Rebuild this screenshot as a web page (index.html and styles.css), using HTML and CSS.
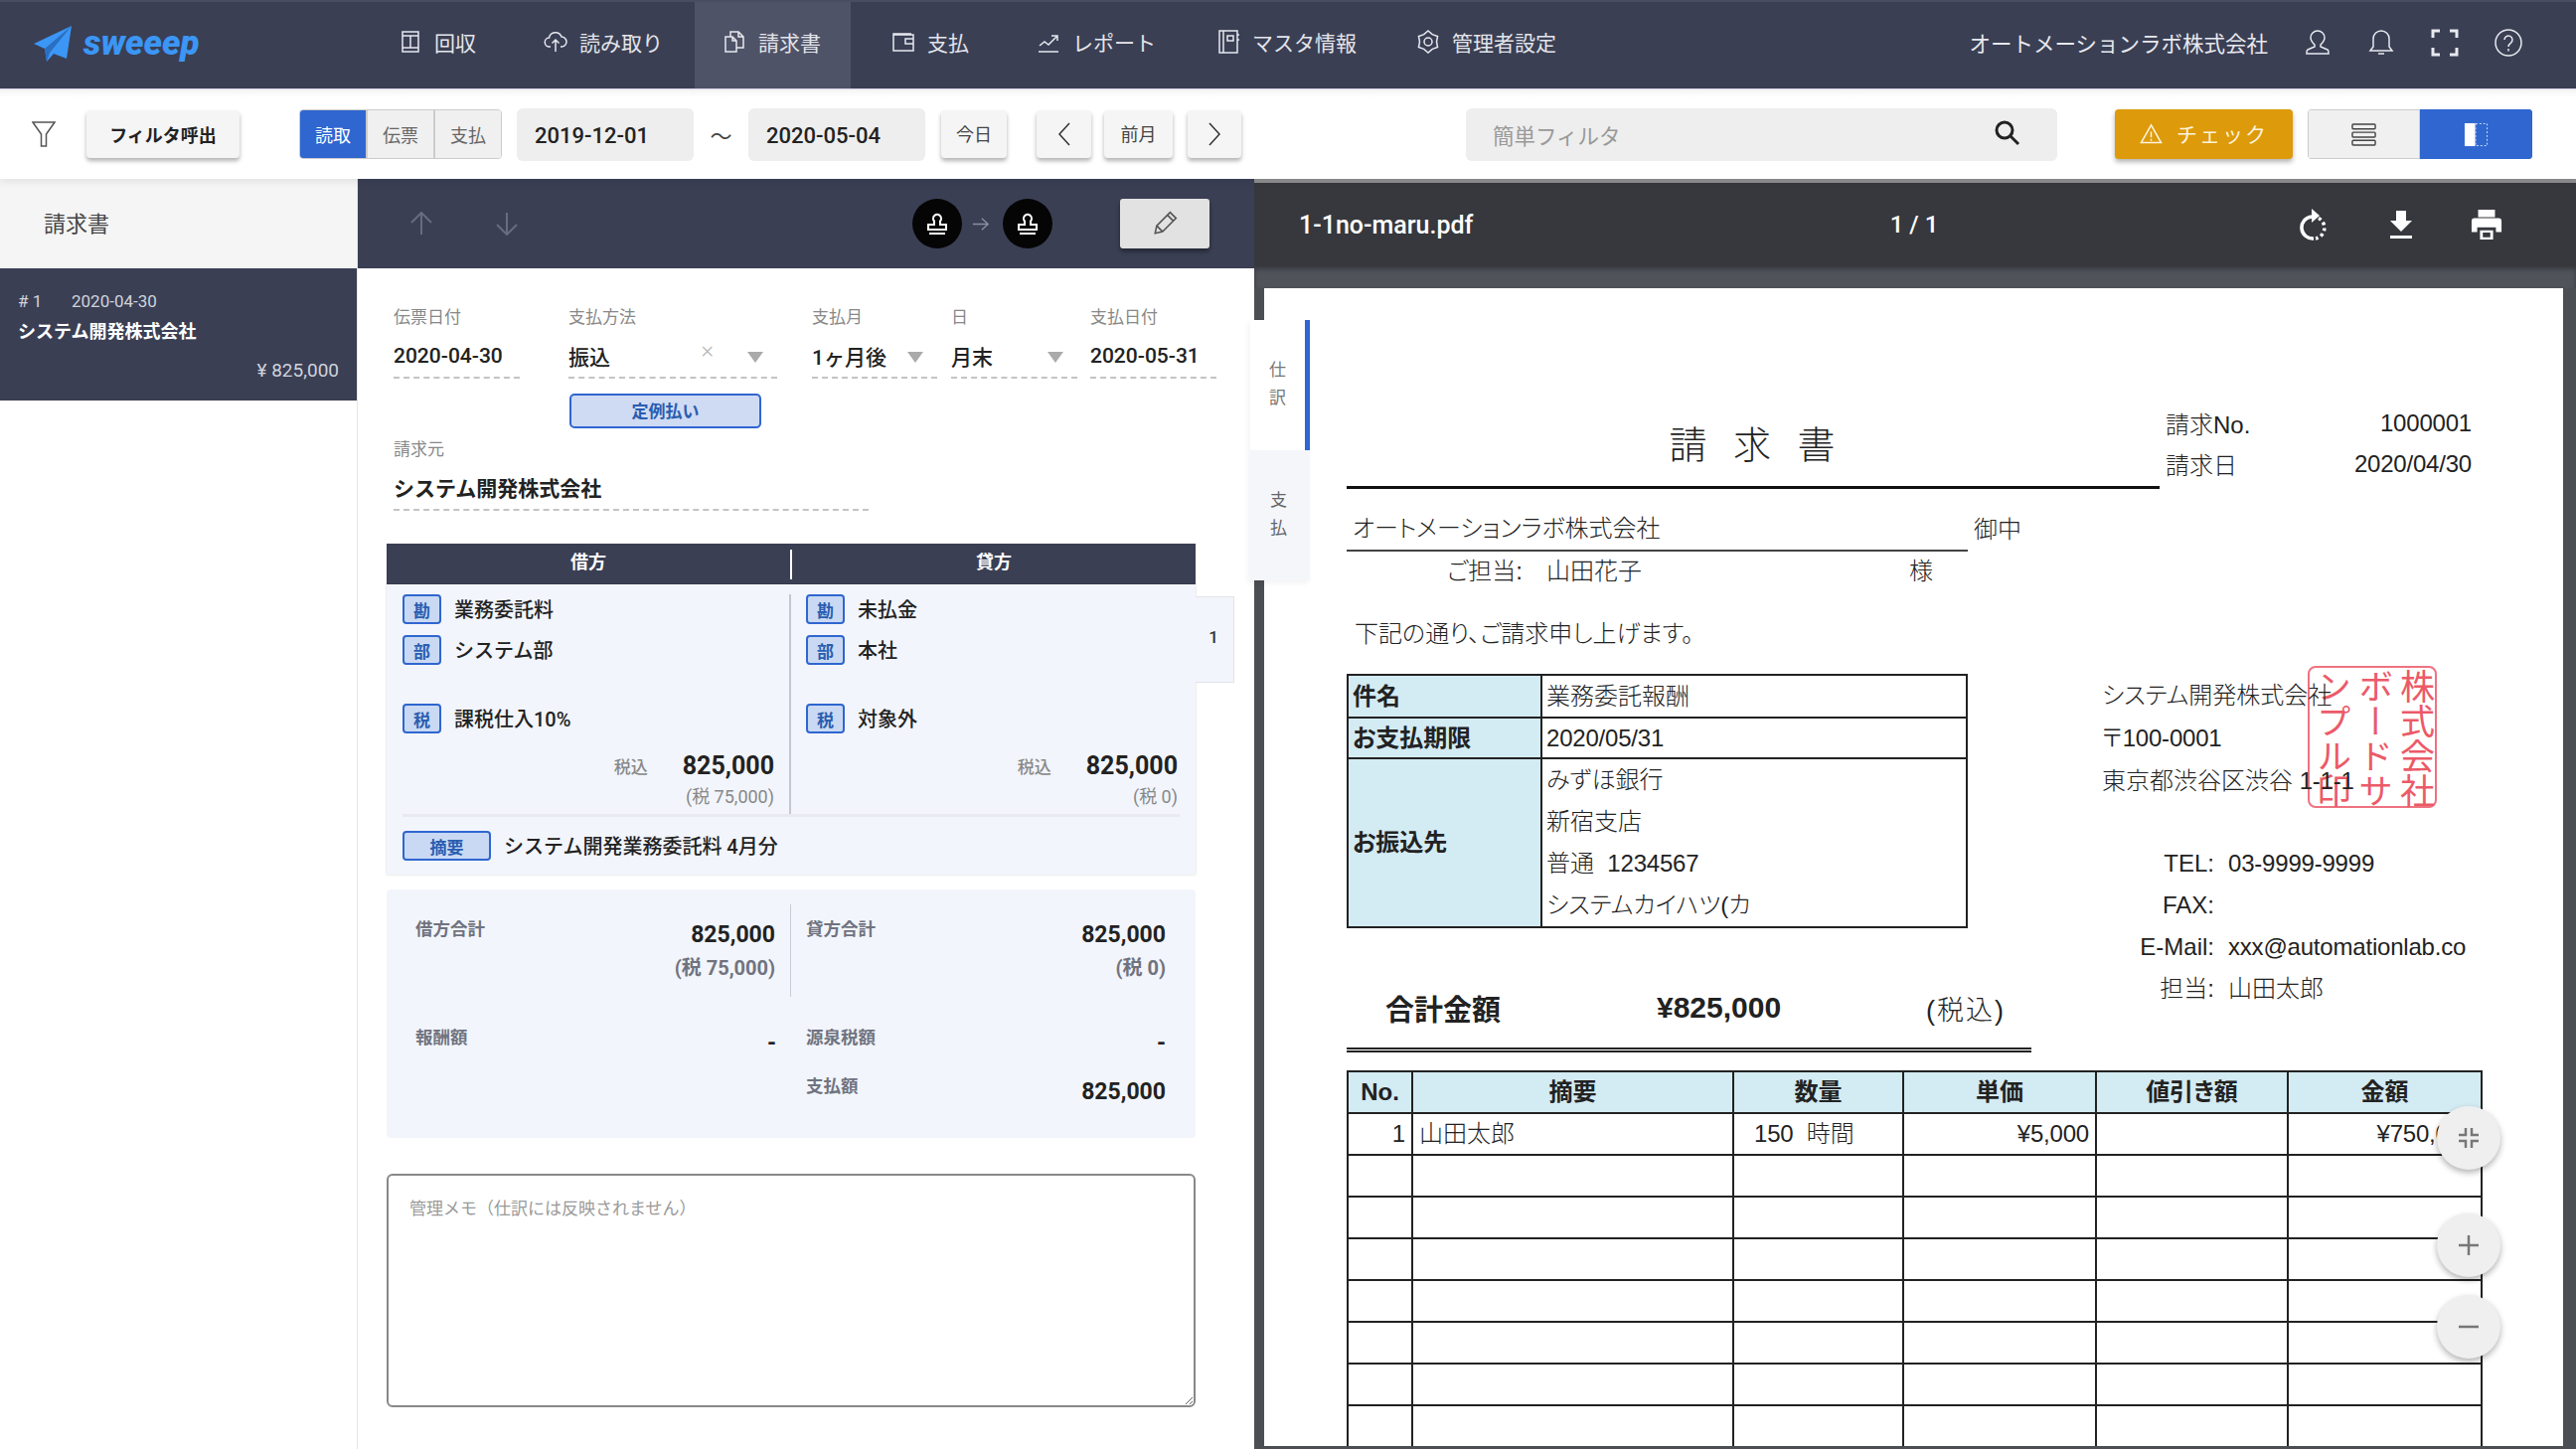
FILE: index.html
```html
<!DOCTYPE html>
<html lang="ja">
<head>
<meta charset="utf-8">
<title>sweeep 請求書</title>
<link rel="stylesheet" href="styles.css">
</head>
<body>
<div class="app">
  <header class="topbar">
    <div class="logo">
      <svg class="logo-mark" viewBox="0 0 38 36"><path d="M38 0 0 18l11 5 2 13 7-8 13 5z" fill="#3b96f5"/><path d="M38 0 11 23l2 13 3-9z" fill="#2a6fc0"/></svg>
      <span class="logo-text">sweeep</span>
    </div>
    <nav class="nav">
      <a class="nav-item"><svg class="ico" viewBox="0 0 24 24"><path d="M4 2h16v20H4zM4 6h16M4 18h16M12 6v12"/></svg><span>回収</span></a>
      <a class="nav-item"><svg class="ico" viewBox="0 0 24 24"><path d="M7 17H6a4.5 4.5 0 0 1-.5-9A6.5 6.5 0 0 1 18 7a5 5 0 0 1 0 10h-1M12 22V10M8.500 13.500 12 10l3.500 3.500"/></svg><span>読み取り</span></a>
      <a class="nav-item is-active"><svg class="ico" viewBox="0 0 24 24"><path d="M3 7h7l4 4v11H3zM10 7v4h4M8 7V2h8l5 5v11h-7M16 2v5h5"/></svg><span>請求書</span></a>
      <a class="nav-item"><svg class="ico" viewBox="0 0 24 24"><path d="M2 5h20v16H2zM22 9h-8v5h8M2 5V4h18"/></svg><span>支払</span></a>
      <a class="nav-item"><svg class="ico" viewBox="0 0 24 24"><path d="M2 22h20M3 16l5-4 4 3 8-8M15 6h6v5"/></svg><span>レポート</span></a>
      <a class="nav-item"><svg class="ico" viewBox="0 0 24 24"><path d="M3 1h18v22H3zM7 1v22M11 6h6v5h-6zM21 5h2M21 10h2"/></svg><span>マスタ情報</span></a>
      <a class="nav-item"><svg class="ico" viewBox="0 0 24 24"><path d="M12 1l4.250 3.640 5.280 1.860-1.030 5.500 1.030 5.500-5.280 1.860L12 23l-4.250-3.640-5.280-1.860L3.500 12 2.470 6.500l5.280-1.860z"/><circle cx="12" cy="12" r="4"/></svg><span>管理者設定</span></a>
    </nav>
    <div class="top-right">
      <span class="company">オートメーションラボ株式会社</span>
      <span class="top-ico"><svg class="ico ico-lg" viewBox="0 0 28 28"><path d="M14 2a7 7 0 0 0-7 7c0 3 2 5 4 7v2l-7 3c-1 .5-1 2-1 3v1h22v-1c0-1 0-2.500-1-3l-7-3v-2c2-2 4-4 4-7a7 7 0 0 0-7-7z"/></svg></span>
      <span class="top-ico"><svg class="ico ico-lg" viewBox="0 0 28 28"><path d="M14 2a8 8 0 0 0-8 8v8l-3 4h22l-3-4v-8a8 8 0 0 0-8-8zM11 25h6"/></svg></span>
      <span class="top-ico"><svg class="ico ico-lg ico-bold" viewBox="0 0 28 28"><path d="M2 9V2h7M19 2h7v7M26 19v7h-7M9 26H2v-7"/></svg></span>
      <span class="top-ico"><svg class="ico ico-lg" viewBox="0 0 28 28"><circle cx="14" cy="14" r="13"/><path d="M10 11a4 4 0 1 1 6.500 3.100c-1.500 1.100-2.500 2-2.500 3.900M14 20v2.500"/></svg></span>
    </div>
  </header>

  <div class="toolbar">
    <svg class="filter-ico" viewBox="0 0 24 26"><path d="M1 1h22l-8.500 12v12h-5V13z"/></svg>
    <button class="tbtn tbtn-filter">フィルタ呼出</button>
    <div class="seg">
      <span class="seg-item is-on">読取</span><span class="seg-item">伝票</span><span class="seg-item">支払</span>
    </div>
    <div class="date-box date-first">2019-12-01</div>
    <span class="tilde">〜</span>
    <div class="date-box">2020-05-04</div>
    <button class="tbtn tbtn-today">今日</button>
    <button class="tbtn tbtn-prev"><svg class="chev" viewBox="0 0 14 24"><path d="M12 1 2 12l10 11"/></svg></button>
    <button class="tbtn tbtn-month">前月</button>
    <button class="tbtn tbtn-next"><svg class="chev" viewBox="0 0 14 24"><path d="M2 1l10 11L2 23"/></svg></button>
    <div class="search">
      <span class="search-ph">簡単フィルタ</span>
      <svg class="search-ico" viewBox="0 0 26 26"><circle cx="10" cy="10" r="8"/><path d="M16 16l8 8"/></svg>
    </div>
    <button class="check-btn"><svg class="warn-ico" viewBox="0 0 24 22"><path d="M12 2 1.500 20.500h21zM12 9v6M12 16.500v2"/></svg><span>チェック</span></button>
    <div class="view-toggle">
      <span class="view-item"><svg class="view-ico" viewBox="0 0 26 26"><rect x="1" y="2" width="24" height="5" rx="1"/><rect x="1" y="10.500" width="24" height="5" rx="1"/><rect x="1" y="19" width="24" height="5" rx="1"/></svg></span>
      <span class="view-item is-on"><svg class="split-ico" viewBox="0 0 26 26"><rect x="1" y="1" width="11" height="24" fill="#fff"/><rect x="12.500" y="1.500" width="12" height="23" fill="none" stroke="#d6e2fa" stroke-dasharray="2 2"/></svg></span>
    </div>
  </div>

  <div class="main">
    <aside class="sidebar">
      <div class="side-head">請求書</div>
      <div class="side-item">
        <div class="side-meta"><span class="side-no"># 1</span><span>2020-04-30</span></div>
        <div class="side-name">システム開発株式会社</div>
        <div class="side-amt">¥ 825,000</div>
      </div>
    </aside>

    <section class="center">
      <div class="center-bar">
        <svg class="updown" viewBox="0 0 24 24"><path d="M12 23V1M2 11 12 1l10 10"/></svg>
        <svg class="updown updown-2" viewBox="0 0 24 24"><path d="M12 1v22M2 13l10 10 10-10"/></svg>
        <span class="stamp-btn stamp-first"><svg class="stamp-ico" viewBox="0 0 24 24"><path d="M9 13V9.500a4 4 0 1 1 6 0V13h6v5H3v-5zM4 22h16" /></svg></span>
        <svg class="step-arrow" viewBox="0 0 20 16"><path d="M1 8h17M11 1.500 18 8l-7 6.500"/></svg>
        <span class="stamp-btn"><svg class="stamp-ico" viewBox="0 0 24 24"><path d="M9 13V9.500a4 4 0 1 1 6 0V13h6v5H3v-5zM4 22h16"/></svg></span>
        <button class="edit-btn"><svg class="pencil" viewBox="0 0 26 26"><path d="M4 22l1.500-7L18 2.500l5.500 5.500L11 20.500zM15.500 5l5.500 5.500M5.500 15l5.500 5.500"/></svg></button>
      </div>

      <div class="form">
        <div class="field-row">
          <div class="field f-date"><div class="f-label">伝票日付</div><div class="f-value">2020-04-30</div></div>
          <div class="field f-method"><div class="f-label">支払方法</div><div class="f-value">振込<span class="f-clear">×</span><span class="caret"></span></div></div>
          <div class="field f-month"><div class="f-label">支払月</div><div class="f-value">1ヶ月後<span class="caret"></span></div></div>
          <div class="field f-day"><div class="f-label">日</div><div class="f-value">月末<span class="caret"></span></div></div>
          <div class="field f-paydate"><div class="f-label">支払日付</div><div class="f-value">2020-05-31</div></div>
        </div>
        <button class="teirei">定例払い</button>
        <div class="field f-vendor"><div class="f-label">請求元</div><div class="f-value">システム開発株式会社</div></div>

        <div class="journal">
          <div class="j-head"><span>借方</span><span>貸方</span></div>
          <div class="j-body">
            <div class="j-cols">
              <div class="j-col j-left">
                <div class="j-row"><span class="tag">勘</span><span class="j-text">業務委託料</span></div>
                <div class="j-row"><span class="tag">部</span><span class="j-text">システム部</span></div>
                <div class="j-row j-tax"><span class="tag">税</span><span class="j-text">課税仕入10%</span></div>
                <div class="j-amt"><span class="j-incl">税込</span><span class="j-num">825,000</span></div>
                <div class="j-note">(税 75,000)</div>
              </div>
              <div class="j-col j-right">
                <div class="j-row"><span class="tag">勘</span><span class="j-text">未払金</span></div>
                <div class="j-row"><span class="tag">部</span><span class="j-text">本社</span></div>
                <div class="j-row j-tax"><span class="tag">税</span><span class="j-text">対象外</span></div>
                <div class="j-amt"><span class="j-incl">税込</span><span class="j-num">825,000</span></div>
                <div class="j-note">(税 0)</div>
              </div>
            </div>
            <div class="j-memo"><span class="tag tag-wide">摘要</span><span class="j-text">システム開発業務委託料 4月分</span></div>
          </div>
          <div class="j-index">1</div>
        </div>

        <div class="summary">
          <div class="sum-cell sum-top sum-l"><span class="sum-label">借方合計</span><div class="sum-val"><div>825,000</div><div class="sum-sub">(税 75,000)</div></div></div>
          <div class="sum-cell sum-top sum-r"><span class="sum-label">貸方合計</span><div class="sum-val"><div>825,000</div><div class="sum-sub">(税 0)</div></div></div>
          <div class="sum-cell sum-mid sum-l"><span class="sum-label">報酬額</span><div class="sum-val">-</div></div>
          <div class="sum-cell sum-mid sum-r"><span class="sum-label">源泉税額</span><div class="sum-val">-</div></div>
          <div class="sum-cell sum-mid sum-l"></div>
          <div class="sum-cell sum-mid sum-r"><span class="sum-label">支払額</span><div class="sum-val">825,000</div></div>
        </div>

        <textarea class="memo" placeholder="管理メモ（仕訳には反映されません）"></textarea>
      </div>

      <div class="v-tabs">
        <div class="v-tab is-on"><span>仕</span><span>訳</span></div>
        <div class="v-tab"><span>支</span><span>払</span></div>
      </div>
    </section>

    <section class="viewer">
      <div class="viewer-bar">
        <span class="pdf-name">1-1no-maru.pdf</span>
        <span class="pdf-pages">1 / 1</span>
        <div class="pdf-tools">
          <span class="pdf-tool"><svg viewBox="0 0 28 32"><path class="rot-a" d="M10 8A11 11 0 0 0 12 30"/><path class="rot-b" d="M17 9.500A11 11 0 0 1 14 30"/><path d="M10 0v14l8-7z" fill="#fff"/></svg></span>
          <span class="pdf-tool"><svg viewBox="0 0 28 32"><path d="M9 2h10v10h6L14 23 3 12h6zM3 27h22v3H3z" fill="#fff"/></svg></span>
          <span class="pdf-tool"><svg viewBox="0 0 34 34"><path fill="#fff" fill-rule="evenodd" d="M8 1h18v8H8zM4 10h26a3 3 0 0 1 3 3v12h-6v-5H7v5H1V13a3 3 0 0 1 3-3zM10 23h14v10H10zM13 25.500v5h8v-5z"/></svg></span>
        </div>
      </div>
      <div class="viewer-band"></div>
      <div class="page">
        <div class="inv-head">
          <div class="inv-title">請 求 書</div>
          <div class="inv-meta">
            <div class="inv-meta-row"><span>請求No.</span><span class="n">1000001</span></div>
            <div class="inv-meta-row"><span>請求日</span><span class="n">2020/04/30</span></div>
          </div>
        </div>
        <div class="inv-to">
          <div class="inv-to-name">オートメーションラボ株式会社</div><span class="inv-to-suffix">御中</span>
        </div>
        <div class="inv-person"><span class="p-label">ご担当:</span><span class="p-name">山田花子</span><span>様</span></div>
        <div class="inv-lead">下記の通り、ご請求申し上げます。</div>
        <div class="inv-mid">
          <div class="inv-left">
            <table class="info">
              <tr class="info-1"><th>件名</th><td>業務委託報酬</td></tr>
              <tr class="info-2"><th>お支払期限</th><td class="n">2020/05/31</td></tr>
              <tr><th>お振込先</th><td class="bank"><div>みずほ銀行</div><div>新宿支店</div><div>普通 &nbsp;<span class="n">1234567</span></div><div>システムカイハツ(カ</div></td></tr>
            </table>
            <div class="total"><span class="total-label">合計金額</span><span class="total-num">¥825,000</span><span class="total-tax">(税込)</span></div>
          </div>
          <div class="sender">
            <div class="seal">
              <div>株式会社</div>
              <div>ボードサ</div>
              <div>ンプル印</div>
            </div>
            <div class="s-line">システム開発株式会社</div>
            <div class="s-line">〒<span class="n">100-0001</span></div>
            <div class="s-line">東京都渋谷区渋谷 <span class="n">1-1-1</span></div>
            <dl class="contact">
              <dt>TEL:</dt><dd class="n">03-9999-9999</dd>
              <dt>FAX:</dt><dd></dd>
              <dt>E-Mail:</dt><dd class="n">xxx@automationlab.co</dd>
              <dt>担当:</dt><dd>山田太郎</dd>
            </dl>
          </div>
        </div>
        <table class="items">
          <thead><tr><th class="c-no">No.</th><th class="c-desc">摘要</th><th class="c-qty">数量</th><th class="c-price">単価</th><th class="c-disc">値引き額</th><th class="c-amt">金額</th></tr></thead>
          <tbody>
            <tr><td class="r n">1</td><td>山田太郎</td><td class="qty"><span class="n">150</span> &nbsp;時間</td><td class="r n">¥5,000</td><td></td><td class="r n">¥750,000</td></tr>
            <tr><td></td><td></td><td></td><td></td><td></td><td></td></tr>
            <tr><td></td><td></td><td></td><td></td><td></td><td></td></tr>
            <tr><td></td><td></td><td></td><td></td><td></td><td></td></tr>
            <tr><td></td><td></td><td></td><td></td><td></td><td></td></tr>
            <tr><td></td><td></td><td></td><td></td><td></td><td></td></tr>
            <tr><td></td><td></td><td></td><td></td><td></td><td></td></tr>
            <tr><td></td><td></td><td></td><td></td><td></td><td></td></tr>
          </tbody>
        </table>
      </div>
      <button class="fab fab-fit"><svg viewBox="0 0 24 24"><path d="M9 2v7H2M15 2v7h7M9 22v-7H2M15 22v-7h7"/></svg></button>
      <button class="fab fab-plus"><svg viewBox="0 0 24 24"><path d="M12 2v20M2 12h20"/></svg></button>
      <button class="fab fab-minus"><svg viewBox="0 0 24 24"><path d="M2 12h20"/></svg></button>
    </section>
  </div>
</div>
</body>
</html>
```
FILE: styles.css
```css
* { box-sizing: border-box; }
html, body { margin: 0; padding: 0; }
body { font-family: Roboto, "Noto Sans CJK JP", sans-serif; color: #222; background: #fff; }
button { font-family: inherit; border: 0; padding: 0; cursor: pointer; }
.app { width: 2592px; height: 1458px; display: flex; flex-direction: column; overflow: hidden; }

/* top bar */
.topbar { height: 90px; flex: none; display: flex; align-items: stretch; background: #3a3f54; border-top: 2px solid #484d62; border-bottom: 1px solid #d9d6e4; padding-left: 34px; color: #e8e9ee; }
.logo { display: flex; align-items: center; width: 166px; gap: 12px; padding-bottom: 4px; }
.logo-mark { width: 38px; height: 36px; flex: none; }
.logo-text { font-size: 35px; font-weight: 900; font-style: italic; color: #3b96f5; line-height: 1; }
.nav { display: flex; margin-left: 171px; }
.nav-item { display: flex; align-items: center; gap: 12px; padding: 0 30px 8px; font-size: 21px; color: #e4e5ea; }
.nav-item:nth-child(2) { margin-left: 8px; }
.nav-item:nth-child(3) { margin-left: 2px; padding-left: 28px; }
.nav-item:nth-child(4) { margin-left: 11px; }
.nav-item:nth-child(5) { margin-left: 8px; }
.nav-item:nth-child(6) { margin-left: 1px; }
.is-active { background: #4f5368; }
.ico { width: 24px; height: 24px; fill: none; stroke: #e8e9ee; stroke-width: 1.5; flex: none; }
.ico-lg { width: 28px; height: 28px; }
.ico-bold { stroke-width: 3; }
.top-right { margin-left: auto; display: flex; align-items: center; padding: 0 36px 6px 0; }
.company { font-size: 21.500px; margin-right: 18px; white-space: nowrap; }
.top-ico { width: 64px; display: flex; justify-content: center; }

/* toolbar */
.toolbar { height: 90px; flex: none; display: flex; align-items: center; padding-left: 32px; background: linear-gradient(#f4f4f4, #fff 8px); position: relative; z-index: 2; box-shadow: 0 3px 8px rgba(0,0,0,.08); }
.filter-ico { width: 24px; height: 26px; fill: none; stroke: #555; stroke-width: 1.5; flex: none; }
.tbtn { height: 48px; background: #f5f5f5; border-radius: 4px; box-shadow: 0 3px 4px rgba(0,0,0,.3); font-size: 18px; color: #444; display: flex; align-items: center; justify-content: center; flex: none; }
.tbtn-filter { width: 154px; margin-left: 31px; font-weight: 700; color: #222; }
.seg { display: flex; width: 204px; height: 50px; margin-left: 60px; border: 1px solid #ccc; border-radius: 4px; overflow: hidden; flex: none; }
.seg-item { flex: 1; display: flex; align-items: center; justify-content: center; font-size: 18px; color: #666; background: #f0f0f0; border-left: 2px solid #ccc; }
.seg-item.is-on { background: #2f66d0; color: #fff; border-left: 0; }
.date-box { width: 178px; height: 53px; background: #eee; border-radius: 6px; display: flex; align-items: center; padding: 3px 0 0 18px; font-size: 22px; font-weight: 500; color: #222; flex: none; }
.date-first { margin-left: 15px; }
.tilde { width: 55px; text-align: center; font-size: 22px; color: #444; flex: none; }
.tbtn-today { width: 66px; margin-left: 16px; padding-bottom: 3px; }
.tbtn-prev { width: 55px; margin-left: 30px; }
.tbtn-month { width: 69px; margin-left: 13px; padding-bottom: 3px; }
.tbtn-next { width: 54px; margin-left: 15px; }
.chev { width: 14px; height: 24px; fill: none; stroke: #333; stroke-width: 1.5; }
.search { width: 595px; height: 53px; margin-left: 226px; background: #eee; border-radius: 6px; display: flex; align-items: center; justify-content: space-between; padding: 0 37px 0 27px; flex: none; }
.search-ph { font-size: 21.500px; color: #999; }
.search-ico { width: 26px; height: 26px; fill: none; stroke: #222; stroke-width: 3; margin-bottom: 2px; }
.check-btn { width: 179px; height: 50px; margin-left: 58px; background: #dd9a0a; border-radius: 4px; box-shadow: 0 3px 5px rgba(0,0,0,.3); display: flex; align-items: center; justify-content: center; gap: 14px; font-size: 21px; letter-spacing: 2px; color: #fdf3dc; flex: none; padding-bottom: 2px; }
.warn-ico { width: 23px; height: 21px; fill: none; stroke: #fdf3dc; stroke-width: 1.6; }
.view-toggle { display: flex; width: 226px; height: 50px; margin-left: 15px; flex: none; border-radius: 4px; overflow: hidden; }
.view-item { flex: 1; display: flex; align-items: center; justify-content: center; background: #f0f0f0; border: 1px solid #ccc; }
.view-item.is-on { background: #2f66d0; border-color: #2f66d0; }
.view-ico { width: 25px; height: 25px; fill: none; stroke: #444; stroke-width: 1.5; }
.split-ico { width: 25px; height: 25px; }

/* layout */
.main { flex: 1; display: flex; min-height: 0; }
.sidebar { width: 360px; flex: none; border-right: 1px solid #e6e6e6; }
.side-head { height: 90px; background: #f5f5f5; display: flex; align-items: center; padding: 0 0 5px 44px; font-size: 22px; color: #444; }
.side-item { height: 133px; background: #3a3f54; color: #d0d3dc; padding: 20px 18px 0; }
.side-meta { display: flex; font-size: 17px; line-height: 26px; }
.side-no { width: 54px; }
.side-name { font-size: 18px; font-weight: 700; color: #fff; line-height: 32px; margin-top: 2px; }
.side-amt { text-align: right; font-size: 19px; line-height: 26px; margin-top: 10px; }

/* centre */
.center { width: 902px; flex: none; position: relative; }
.center-bar { height: 90px; background: #3a3f54; display: flex; align-items: center; padding-left: 52px; }
.updown { width: 24px; height: 24px; fill: none; stroke: #676c80; stroke-width: 2; flex: none; }
.updown-2 { margin-left: 62px; }
.stamp-btn { width: 50px; height: 50px; border-radius: 50%; background: #050505; display: flex; align-items: center; justify-content: center; flex: none; }
.stamp-first { margin-left: 396px; }
.stamp-ico { width: 24px; height: 24px; fill: none; stroke: #fff; stroke-width: 2; }
.step-arrow { width: 18px; height: 15px; margin: 0 13px 0 10px; fill: none; stroke: #8a8fa3; stroke-width: 1.5; flex: none; }
.edit-btn { width: 90px; height: 50px; margin-left: 68px; background: #e2e2e2; border-radius: 3px; box-shadow: 0 3px 4px rgba(0,0,0,.4); display: flex; align-items: center; justify-content: center; }
.pencil { width: 28px; height: 28px; fill: none; stroke: #555; stroke-width: 1.5; }

.form { padding: 36px 0 0 29px; }
.field-row { display: flex; margin-left: 7px; }
.field { flex: none; }
.f-label { font-size: 17px; line-height: 26px; color: #888; }
.f-value { display: flex; align-items: center; height: 49px; padding-top: 7px; padding-bottom: 2px; font-size: 21px; font-weight: 500; color: #222; border-bottom: 2px dashed #c4c4c4; position: relative; white-space: nowrap; }
.f-date { width: 127px; }
.f-method { width: 210px; margin-left: 49px; }
.f-month { width: 126px; margin-left: 35px; }
.f-day { width: 127px; margin-left: 14px; }
.f-paydate { width: 127px; margin-left: 13px; }
.f-clear { position: absolute; right: 64px; top: 6px; font-size: 24px; font-weight: 300; color: #bbb; }
.caret { position: absolute; right: 14px; top: 22px; border: 8px solid transparent; border-top: 11px solid #aaa; border-bottom: 0; }
.teirei { display: block; width: 193px; height: 35px; margin: 15px 0 0 184px; padding-bottom: 2px; background: #cfdbf3; border: 2px solid #2f66d0; border-radius: 5px; font-size: 17px; font-weight: 700; color: #2a5db0; }
.f-vendor { width: 478px; margin: 8px 0 0 7px; }
.f-vendor .f-value { font-weight: 700; padding-bottom: 4px; }

.journal { width: 814px; margin-top: 33px; position: relative; }
.j-head { height: 41px; background: #3a3f54; color: #fff; display: flex; align-items: center; font-size: 18px; font-weight: 700; }
.j-head span { flex: 1; text-align: center; height: 30px; line-height: 26px; }
.j-head span:first-child { border-right: 2px solid #fff; }
.j-body { height: 292px; background: #f2f5fb; padding: 10px 16px 0; box-shadow: 0 0 2px rgba(0,0,0,.2); }
.j-cols { display: flex; height: 224px; border-bottom: 3px solid #e8eaef; }
.j-col { flex: none; }
.j-left { width: 391px; padding-right: 15px; border-right: 2px solid #c4c7cf; }
.j-right { flex: 1; padding: 0 2px 0 15px; }
.j-row { display: flex; align-items: center; height: 30px; margin-bottom: 11px; }
.j-tax { margin-top: 39px; margin-bottom: 0; }
.tag { width: 39px; height: 30px; display: flex; align-items: center; justify-content: center; background: #c9d9f3; border: 2px solid #2f66d0; border-radius: 4px; color: #2a5db0; font-size: 17px; font-weight: 700; flex: none; }
.tag-wide { width: 89px; }
.j-text { font-size: 20px; font-weight: 500; margin: 0 0 2px 13px; white-space: nowrap; color: #222; }
.j-amt { display: flex; justify-content: flex-end; align-items: center; gap: 35px; margin-top: 15px; height: 34px; }
.j-incl { font-size: 17px; font-weight: 500; color: #888; }
.j-num { font-size: 25px; font-weight: 700; color: #222; }
.j-note { text-align: right; font-size: 18px; line-height: 24px; margin-top: 3px; color: #888; }
.j-memo { display: flex; align-items: center; height: 30px; margin-top: 14px; }
.j-index { position: absolute; left: 814px; top: 53px; width: 39px; height: 87px; padding: 0 2px 5px 0; background: #f2f5fb; border: 1px solid #e2e4ea; border-left: 0; display: flex; align-items: center; justify-content: center; font-size: 17px; font-weight: 500; color: #333; }

.summary { width: 814px; height: 250px; margin-top: 15px; padding-top: 15px; background: #f2f5fb; border-radius: 4px; display: grid; grid-template-columns: 407px 407px; grid-template-rows: 93px 75px 49px; }
.sum-cell { display: flex; justify-content: space-between; align-items: flex-start; }
.sum-l { padding: 0 15px 0 29px; }
.sum-r { padding: 0 30px 0 15px; }
.sum-top.sum-l { border-right: 1px solid #c9ccd4; }
.sum-top .sum-label { margin-top: 10px; }
.sum-top .sum-val { margin-top: 16px; }
.sum-mid { align-items: flex-start; }
.sum-cell:nth-child(3), .sum-cell:nth-child(4) { padding-top: 26px; }
.sum-label { font-size: 17.500px; font-weight: 700; line-height: 30px; color: #70737f; }
.sum-val { font-size: 23px; font-weight: 700; line-height: 30px; text-align: right; margin-top: 6px; color: #222; }
.sum-sub { font-size: 20px; line-height: 30px; margin-top: 3px; color: #70737f; }

.memo { display: block; width: 814px; height: 235px; margin-top: 36px; padding: 19px 21px; border: 2px solid #888; border-radius: 6px; font-family: inherit; font-size: 17px; outline: 0; background: #fff; }
.memo::placeholder { color: #9a9a9a; }

.v-tabs { position: absolute; left: 898px; top: 142px; width: 60px; z-index: 3; }
.v-tab { height: 131px; background: #fff; display: flex; flex-direction: column; align-items: center; justify-content: center; gap: 3px; font-size: 17px; color: #777; padding: 0 3px 6px 0; box-shadow: -2px 3px 6px rgba(0,0,0,.05); }
.v-tab + .v-tab { background: #f4f6fa; color: #666; }
.v-tab.is-on { border-right: 5px solid #2f66d0; padding-right: 0; }

/* viewer */
.viewer { flex: 1; position: relative; background: #4b4e52; display: flex; flex-direction: column; min-width: 0; }
.viewer-bar { height: 88px; margin-top: 0; flex: none; border-top: 4px solid #8f8f8f; background: #36383d; display: grid; grid-template-columns: 1fr auto 1fr; align-items: center; padding: 0 47px 0 45px; color: #fff; }
.pdf-name { font-size: 25px; font-weight: 500; }
.pdf-pages { font-size: 24px; font-weight: 500; }
.pdf-tools { display: flex; justify-content: flex-end; }
.pdf-tool { width: 86px; display: flex; justify-content: center; }
.pdf-tool svg { width: 32px; height: 32px; fill: none; stroke: none; }
.rot-a { stroke: #fff; stroke-width: 3.500; }
.rot-b { stroke: #fff; stroke-width: 3.500; stroke-dasharray: 3 3; }
.viewer-band { height: 22px; flex: none; background: #50535a; box-shadow: inset 0 3px 4px rgba(0,0,0,.3); }

.page { width: 1307px; height: 1165px; flex: none; margin-left: 10px; background: #fff; overflow: hidden; padding-left: 83px; font-family: "Liberation Sans", "Noto Sans CJK JP", sans-serif; font-size: 24px; font-weight: 300; font-feature-settings: "palt"; color: #222; }
.n { letter-spacing: -.2px; }
.inv-head { display: flex; height: 202px; }
.inv-title { width: 818px; height: 202px; border-bottom: 3px solid #111; padding: 138px 0 0 6px; text-align: center; font-size: 38px; line-height: 40px; letter-spacing: 8px; }
.inv-meta { width: 308px; margin-left: 6px; padding-top: 115px; }
.inv-meta-row { display: flex; justify-content: space-between; height: 41px; align-items: center; }
.inv-to { display: flex; align-items: center; margin-top: 20px; }
.inv-to-name { width: 625px; height: 43px; line-height: 40px; padding-left: 6px; border-bottom: 2px solid #444; }
.inv-to-suffix { margin-left: 6px; padding-bottom: 6px; }
.inv-person { display: flex; height: 40px; margin-top: -3px; align-items: center; }
.p-label { width: 201px; padding-left: 101px; }
.p-name { width: 365px; }
.inv-lead { margin-top: 26px; line-height: 40px; padding-left: 8px; }
.inv-mid { display: flex; margin-top: 20px; }
.inv-left { width: 689px; flex: none; }
.info { width: 625px; border-collapse: collapse; table-layout: fixed; }
.info th, .info td { border: 2px solid #222; padding: 0 4px; font-weight: 300; text-align: left; height: 41px; line-height: 38px; }
.info th { width: 195px; background: #d3ebf3; font-weight: 700; }
.info-1 th, .info-1 td { height: 43px; }
.bank { height: 169px; }
.bank div { line-height: 42px; height: 42px; }
.total { display: flex; align-items: center; margin-top: 40px; padding-left: 39px; border-bottom: 5px double #222; height: 85px; }
.total-label { width: 273px; font-size: 29px; font-weight: 700; }
.total-num { width: 271px; font-size: 30px; font-weight: 700; }
.total-tax { font-size: 27px; letter-spacing: 2px; }
.sender { position: relative; margin-left: 71px; flex: 1; }
.s-line { height: 43px; line-height: 43px; position: relative; white-space: nowrap; }
.seal { position: absolute; left: 207px; top: -8px; width: 130px; height: 143px; padding: 1px 0; border: 2px solid #ef7280; border-radius: 8px; color: #ec5a68; writing-mode: vertical-rl; font-size: 35px; line-height: 42px; font-feature-settings: normal; font-weight: 400; text-align: center; white-space: nowrap; }
.contact { margin: 41px 0 0; display: grid; grid-template-columns: 113px auto; column-gap: 14px; grid-auto-rows: 42px; line-height: 42px; white-space: nowrap; }
.contact dt { text-align: right; }
.contact dd { margin: 0; }
.items { width: 1141px; margin-top: 18px; border-collapse: collapse; table-layout: fixed; }
.items th, .items td { border: 2px solid #222; height: 42px; padding: 0 6px; line-height: 36px; }
.items th { background: #d3ebf3; font-weight: 700; text-align: center; }
.c-no { width: 65px; }
.c-desc { width: 323px; }
.c-qty { width: 171px; }
.c-price { width: 194px; }
.c-disc { width: 193px; }
.c-amt { width: 195px; }
.items .r { text-align: right; }
.items .qty { padding-left: 20px; }

.fab { position: absolute; left: 1190px; width: 64px; height: 64px; border-radius: 50%; background: #efefef; box-shadow: 0 3px 6px rgba(0,0,0,.3); display: flex; align-items: center; justify-content: center; }
.fab svg { width: 24px; height: 24px; fill: none; stroke: #777; stroke-width: 2.500; }
.fab-fit { top: 933px; }
.fab-plus { top: 1041px; }
.fab-minus { top: 1123px; }
```
